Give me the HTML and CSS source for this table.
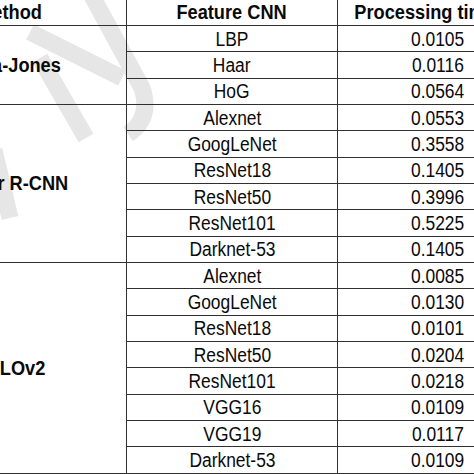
FILE: index.html
```html
<!DOCTYPE html>
<html>
<head>
<meta charset="utf-8">
<link rel="stylesheet" href="styles.css">
</head>
<body>
<div class="page">
  <svg class="watermark" width="474" height="474" viewBox="0 0 474 474">
    <g fill="none" stroke="#e6e6e6" stroke-width="17" stroke-linecap="butt">
      <path d="M30 32 L122 78"/>
      <path d="M40 58 L86 138"/>
      <path d="M92 -4 L142 88 Q152 118 128 134"/>
      <path d="M-6 150 L10 218"/>
    </g>
  </svg>
  <table class="results">
    <colgroup>
      <col class="c-method">
      <col class="c-feature">
      <col class="c-time">
    </colgroup>
    <thead>
      <tr>
        <th><span class="t">Method</span></th>
        <th><span class="t">Feature CNN</span></th>
        <th><span class="t">Processing time (s)</span></th>
      </tr>
    </thead>
    <tbody>
      <tr><td class="group" rowspan="3"><span class="t">Viola-Jones</span></td><td><span class="t">LBP</span></td><td><span class="t">0.0105</span></td></tr>
      <tr><td><span class="t">Haar</span></td><td><span class="t">0.0116</span></td></tr>
      <tr><td><span class="t">HoG</span></td><td><span class="t">0.0564</span></td></tr>
      <tr><td class="group" rowspan="6"><span class="t">Faster R-CNN</span></td><td><span class="t">Alexnet</span></td><td><span class="t">0.0553</span></td></tr>
      <tr><td><span class="t">GoogLeNet</span></td><td><span class="t">0.3558</span></td></tr>
      <tr><td><span class="t">ResNet18</span></td><td><span class="t">0.1405</span></td></tr>
      <tr><td><span class="t">ResNet50</span></td><td><span class="t">0.3996</span></td></tr>
      <tr><td><span class="t">ResNet101</span></td><td><span class="t">0.5225</span></td></tr>
      <tr><td><span class="t">Darknet-53</span></td><td><span class="t">0.1405</span></td></tr>
      <tr><td class="group" rowspan="8"><span class="t">YOLOv2</span></td><td><span class="t">Alexnet</span></td><td><span class="t">0.0085</span></td></tr>
      <tr><td><span class="t">GoogLeNet</span></td><td><span class="t">0.0130</span></td></tr>
      <tr><td><span class="t">ResNet18</span></td><td><span class="t">0.0101</span></td></tr>
      <tr><td><span class="t">ResNet50</span></td><td><span class="t">0.0204</span></td></tr>
      <tr><td><span class="t">ResNet101</span></td><td><span class="t">0.0218</span></td></tr>
      <tr><td><span class="t">VGG16</span></td><td><span class="t">0.0109</span></td></tr>
      <tr><td><span class="t">VGG19</span></td><td><span class="t">0.0117</span></td></tr>
      <tr><td><span class="t">Darknet-53</span></td><td><span class="t">0.0109</span></td></tr>
    </tbody>
  </table>
</div>
</body>
</html>
```

FILE: styles.css
```css
html, body {
  margin: 0;
  padding: 0;
  background: #ffffff;
}

.page {
  position: relative;
  width: 474px;
  height: 474px;
  overflow: hidden;
  font-family: "Liberation Sans", Arial, sans-serif;
  color: #0a0a0a;
}

.watermark {
  position: absolute;
  left: 0;
  top: 0;
  z-index: 0;
}

.results {
  position: relative;
  z-index: 1;
  border-collapse: collapse;
  table-layout: fixed;
  width: 646px;
  margin-left: -108px;
  margin-top: -1.5px;
  font-size: 20px;
}

.c-method { width: 234px; }
.c-feature { width: 211px; }
.c-time { width: 201px; }

.results tr {
  height: 26.35px;
}

.results th,
.results td {
  border: 1px solid #303030;
  padding: 0;
  text-align: center;
  vertical-align: middle;
  line-height: 20px;
  white-space: nowrap;
}

.results th,
.results td.group {
  font-weight: bold;
}

.t {
  display: inline-block;
  transform: scaleX(0.87);
  transform-origin: center;
}

.results th .t,
.results td.group .t {
  transform: scaleX(0.91);
}
```
